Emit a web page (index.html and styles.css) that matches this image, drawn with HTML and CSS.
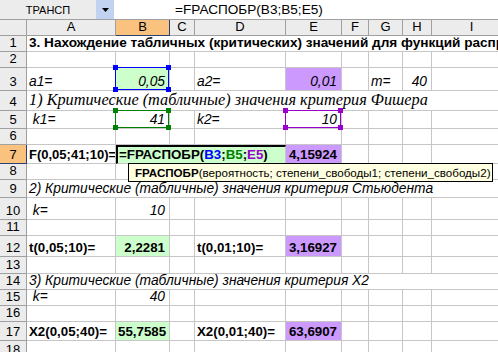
FILE: index.html
```html
<!DOCTYPE html>
<html lang="ru">
<head>
    <meta charset="UTF-8">
    <title>FРАСПОБР</title>
    <link rel="stylesheet" href="styles.css">
</head>
<body>

    <div class="formula-bar">
        <div class="name-box">ТРАНСП</div>
        <div class="name-drop">
            <svg width="7" height="4" viewBox="0 0 7 4"><path d="M0 0h7L3.5 4z" fill="#000"/></svg>
        </div>
        <div class="formula-input">=FРАСПОБР(B3;B5;E5)</div>
    </div>

    <table class="sheet">
        <colgroup>
            <col class="c-head">
            <col class="c-a"><col class="c-b"><col class="c-c"><col class="c-d"><col class="c-e">
            <col class="c-f"><col class="c-g"><col class="c-h"><col class="c-i">
        </colgroup>
        <tr class="r-head">
            <th class="corner"></th>
            <th>A</th><th class="active">B</th><th>C</th><th>D</th><th>E</th><th>F</th><th>G</th><th>H</th><th>I</th>
        </tr>
        <tr class="r1">
            <th>1</th>
            <td colspan="9" class="b title">3. Нахождение табличных (критических) значений для функций распределения</td>
        </tr>
        <tr class="r2">
            <th>2</th><td></td><td></td><td></td><td></td><td></td><td></td><td></td><td></td><td></td>
        </tr>
        <tr class="r3">
            <th>3</th>
            <td class="i">a1=</td>
            <td class="i num green ref-cell">0,05<span class="ref ref-blue"><i class="tl"></i><i class="tr"></i><i class="bl"></i><i class="br"></i></span></td>
            <td></td>
            <td class="i">a2=</td>
            <td class="i num purple">0,01</td>
            <td></td>
            <td class="i">m=</td>
            <td class="i num">40</td>
            <td></td>
        </tr>
        <tr class="r4">
            <th>4</th>
            <td colspan="9" class="serif">1) Критические (табличные) значения критерия Фишера</td>
        </tr>
        <tr class="r5">
            <th>5</th>
            <td class="i">&nbsp;k1=</td>
            <td class="i num ref-cell">41<span class="ref ref-green"><i class="tl"></i><i class="tr"></i><i class="bl"></i><i class="br"></i></span></td>
            <td></td>
            <td class="i">k2=</td>
            <td class="i num ref-cell">10<span class="ref ref-purple"><i class="tl"></i><i class="tr"></i><i class="bl"></i><i class="br"></i></span></td>
            <td></td><td></td><td></td><td></td>
        </tr>
        <tr class="r6">
            <th>6</th><td></td><td></td><td></td><td></td><td></td><td></td><td></td><td></td><td></td>
        </tr>
        <tr class="r7">
            <th class="active">7</th>
            <td class="b label-tight">F(0,05;41;10)=</td>
            <td colspan="3" class="b green editing">=FРАСПОБР(<span class="t-blue">B3</span>;<span class="t-green">B5</span>;<span class="t-purple">E5</span>)</td>
            <td class="b num purple">4,15924</td>
            <td></td><td></td><td></td><td></td>
        </tr>
        <tr class="r8">
            <th>8</th><td></td><td></td><td></td><td></td><td></td><td></td><td></td><td></td><td></td>
        </tr>
        <tr class="r9">
            <th>9</th>
            <td colspan="9" class="i">2) Критические (табличные) значения критерия Стьюдента</td>
        </tr>
        <tr class="r10">
            <th>10</th>
            <td class="i">&nbsp;k=</td>
            <td class="i num">10</td>
            <td></td><td></td><td></td><td></td><td></td><td></td><td></td>
        </tr>
        <tr class="r11">
            <th>11</th><td></td><td></td><td></td><td></td><td></td><td></td><td></td><td></td><td></td>
        </tr>
        <tr class="r12">
            <th>12</th>
            <td class="b">t(0,05;10)=</td>
            <td class="b num green">2,2281</td>
            <td></td>
            <td class="b">t(0,01;10)=</td>
            <td class="b num purple">3,16927</td>
            <td></td><td></td><td></td><td></td>
        </tr>
        <tr class="r13">
            <th>13</th><td></td><td></td><td></td><td></td><td></td><td></td><td></td><td></td><td></td>
        </tr>
        <tr class="r14">
            <th>14</th>
            <td colspan="9" class="i">3) Критические (табличные) значения критерия X2</td>
        </tr>
        <tr class="r15">
            <th>15</th>
            <td class="i">&nbsp;k=</td>
            <td class="i num">40</td>
            <td></td><td></td><td></td><td></td><td></td><td></td><td></td>
        </tr>
        <tr class="r16">
            <th>16</th><td></td><td></td><td></td><td></td><td></td><td></td><td></td><td></td><td></td>
        </tr>
        <tr class="r17">
            <th>17</th>
            <td class="b">X2(0,05;40)=</td>
            <td class="b num green">55,7585</td>
            <td></td>
            <td class="b">X2(0,01;40)=</td>
            <td class="b num purple">63,6907</td>
            <td></td><td></td><td></td><td></td>
        </tr>
        <tr class="r18">
            <th>18</th><td></td><td></td><td></td><td></td><td></td><td></td><td></td><td></td><td></td>
        </tr>
    </table>

    <!-- подсказка по аргументам функции -->
    <div class="tooltip"><b>FРАСПОБР</b>(вероятность; степени_свободы1; степени_свободы2)</div>

</body>
</html>
```

FILE: styles.css
```css
body {
    margin: 0;
    width: 498px;
    height: 352px;
    overflow: hidden;
    position: relative;
    background: #fff;
    color: #000;
    font-family: "Liberation Sans", Arial, sans-serif;
    font-size: 13px;
}

/* строка формул */
.formula-bar {
    display: flex;
    height: 20px;
    box-sizing: border-box;
    border-bottom: 1px solid #a0a0a0;
}

.name-box {
    width: 96px;
    background: #ececec;
    font-size: 11px;
    display: flex;
    align-items: center;
    justify-content: center;
}

.name-drop {
    width: 18px;
    background: #c1d3f0;
    display: flex;
    align-items: center;
    justify-content: center;
}

.formula-input {
    flex: 1;
    margin-left: 2px;
    padding-left: 59px;
    font-size: 13.6px;
    line-height: 19px;
    background: #fff;
}

/* лист */
.sheet {
    border-collapse: separate;
    border-spacing: 0;
    table-layout: fixed;
    width: 512px;
}

.c-head { width: 27px; }
.c-a { width: 89px; }
.c-b { width: 54px; }
.c-c { width: 25px; }
.c-d { width: 91px; }
.c-e { width: 56px; }
.c-f { width: 27px; }
.c-g { width: 34px; }
.c-h { width: 29px; }
.c-i { width: 80px; }

.r-head { height: 16px; }
.r1 { height: 16px; }
.r2 { height: 15px; }
.r3 { height: 23px; }
.r4 { height: 20px; }
.r5 { height: 18px; }
.r6 { height: 15px; }
.r7 { height: 19px; }
.r8 { height: 15px; }
.r9 { height: 18px; }
.r10 { height: 22px; }
.r11 { height: 15px; }
.r12 { height: 21px; }
.r13 { height: 17px; }
.r14 { height: 16px; }
.r15 { height: 16px; }
.r16 { height: 16px; }
.r17 { height: 19px; }
.r18 { height: 18px; }

th, td {
    box-sizing: border-box;
    padding: 0 2px 1px;
    line-height: 14px;
    white-space: nowrap;
    overflow: hidden;
    vertical-align: bottom;
}

th {
    background: #ececec;
    font-weight: normal;
    text-align: center;
    border-right: 1px solid #a0a0a0;
    border-bottom: 1px solid #a0a0a0;
}

.r-head th { vertical-align: middle; }

th.active {
    background: #f9c37f;
    border-color: #2c3f73;
}

td {
    font-size: 13.3px;
    border-right: 1px solid #c6c6c6;
    border-bottom: 1px solid #c6c6c6;
}

.b { font-weight: bold; }
.i {
    font-style: italic;
    font-size: 13.8px;
}
.title { font-size: 13.6px; }
.label-tight {
    font-size: 13px;
    padding-right: 0;
}

.serif {
    font-family: "Liberation Serif", "Times New Roman", serif;
    font-style: italic;
    font-size: 16.3px;
    line-height: 18px;
}

.num {
    text-align: right;
    padding-right: 4px;
}

.green { background: #ccffcc; }
.purple { background: #cc99ff; }

.editing {
    border-top: 2px solid #000;
    border-left: 2px solid #000;
    padding-left: 1px;
}

.t-blue { color: #0000ff; }
.t-green { color: #008000; }
.t-purple { color: #9900cc; }

/* рамки ссылок */
.ref-cell {
    position: relative;
    overflow: visible;
}

.ref {
    position: absolute;
    left: -1px;
    top: -1px;
    right: 0;
    bottom: 0;
    border: 1px solid currentColor;
}

.ref i {
    position: absolute;
    width: 5px;
    height: 5px;
    background: currentColor;
}

.ref .tl { left: -3px; top: -3px; }
.ref .tr { right: -3px; top: -3px; }
.ref .bl { left: -3px; bottom: -3px; }
.ref .br { right: -3px; bottom: -3px; }

.ref-blue { color: #0000ff; }
.ref-green { color: #008000; }
.ref-purple { color: #9900cc; }

.tooltip {
    position: absolute;
    left: 128px;
    top: 163px;
    width: 365px;
    height: 19px;
    box-sizing: border-box;
    padding-left: 6px;
    background: #ffffe1;
    border: 1px solid #000;
    font-size: 11.6px;
    line-height: 17px;
    white-space: nowrap;
}
```
